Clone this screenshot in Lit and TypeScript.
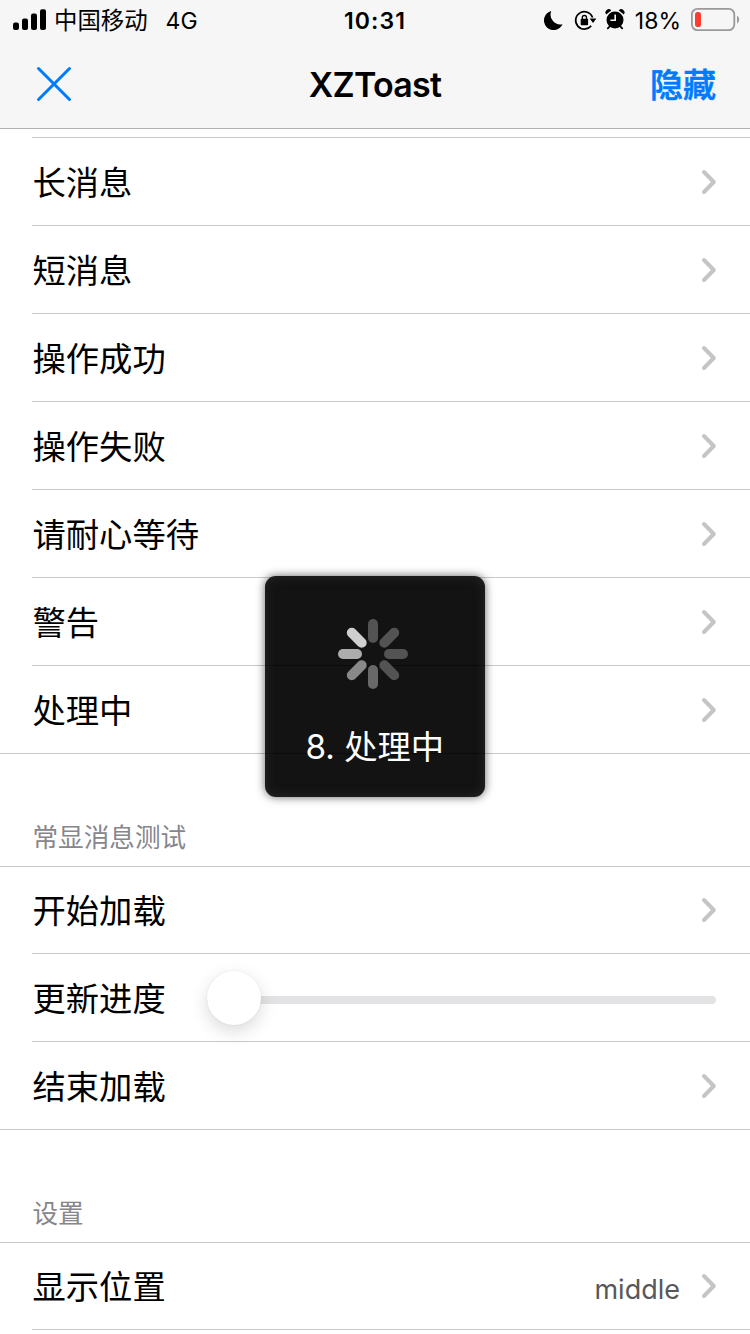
import { LitElement, html, css, svg } from "lit";
import { customElement, property } from "lit/decorators.js";

const chevron = html`<svg width="18" height="28" viewBox="0 0 18 28" fill="none" stroke="#c5c5c8" stroke-width="4">
  <path d="M4 4 L13.8 14 L4 24" stroke-linecap="round" stroke-linejoin="round" />
</svg>`;

@customElement("list-row")
class ListRow extends LitElement {
  @property() label = "";
  @property() detail = "";
  @property({ type: Boolean }) slider = false;
  @property({ type: Boolean, reflect: true }) last = false;
  @property({ type: Boolean, reflect: true }) first = false;

  static styles = css`
    :host { display: block; height: 88px; box-sizing: border-box; padding-left: 32px; }
    :host([first]) { height: 87px; }
    :host([last]) { padding-left: 0; }
    .row {
      height: 100%; box-sizing: border-box; border-bottom: 1px solid #c8c7cc;
      display: flex; align-items: center; padding-right: 32px;
    }
    :host([last]) .row { padding-left: 32px; }
    .label { font-size: 33.3px; line-height: 48px; color: #000; white-space: nowrap; padding-top: 3px; padding-left: 0.5px; }
    :host([first]) .label { padding-top: 2px; }
    .detail { margin-left: auto; font-size: 27px; line-height: 40px; color: #58585a; padding-top: 8px; margin-right: 20px; }
    .chev { margin-left: auto; display: flex; padding-top: 1px; }
    :host([first]) .chev { padding-top: 0; }
    .detail + .chev { margin-left: 0; }
    .track {
      flex: 1; margin: 5px 2px 0 41.5px; height: 8px; border-radius: 4px; background: #e3e3e5;
      display: flex; align-items: center;
    }
    .thumb {
      flex: none; width: 54px; height: 54px; border-radius: 50%; background: #fff; margin-top: -4px;
      box-shadow: 0 6px 18px rgba(0, 0, 0, 0.15), 0 0 2px rgba(0, 0, 0, 0.08);
    }
  `;

  render() {
    return html`<div class="row">
      <span class="label">${this.label}</span>
      ${this.slider
        ? html`<div class="track"><div class="thumb"></div></div>`
        : html`${this.detail ? html`<span class="detail">${this.detail}</span>` : ""}<span class="chev">${chevron}</span>`}
    </div>`;
  }
}

@customElement("app-root")
class AppRoot extends LitElement {
  static styles = css`
    :host {
      display: block; position: relative; width: 750px; height: 1334px; overflow: hidden;
      background: #fff; font-family: Inter, "Noto Sans CJK SC", sans-serif; color: #000;
    }
    .header { height: 129px; box-sizing: border-box; background: #f6f6f6; border-bottom: 1px solid #b2b2b2; }
    .status { height: 40px; display: grid; grid-template-columns: 1fr auto 1fr; align-items: center; font-size: 23px; line-height: 40px; }
    .left, .right { display: flex; align-items: center; }
    .left { padding-left: 13px; }
    .carrier { margin-left: 8px; font-size: 23.4px; padding-top: 2px; line-height: 38px; }
    .net { margin-left: 18px; padding-top: 2px; line-height: 38px; }
    .time { font-weight: 600; letter-spacing: 1.1px; padding-top: 2px; line-height: 38px; }
    .right { justify-content: flex-end; padding-right: 10px; }
    .pct { margin: 0 10px 0 9px; padding-top: 2px; line-height: 38px; }
    .nav { height: 88px; display: grid; grid-template-columns: 1fr auto 1fr; align-items: center; }
    .close { margin-left: 36px; display: flex; }
    .title { font-size: 34px; font-weight: 600; line-height: 48px; letter-spacing: -0.75px; padding-top: 1px; }
    .hide {
      text-align: right; padding: 2px 34px 0 0; color: #007aff; font-size: 33px; font-weight: 500; line-height: 48px;
      -webkit-text-stroke: 0.6px #007aff;
    }
    .peek { height: 9px; box-sizing: border-box; margin-left: 32px; border-bottom: 1px solid #c8c7cc; }
    .section {
      height: 113px; box-sizing: border-box; border-bottom: 1px solid #c8c7cc;
      padding: 65px 0 0 32.5px; font-size: 25.6px; line-height: 38px; color: #86868b;
    }
    .toast {
      position: absolute; left: 264.5px; top: 576px; width: 220.5px; height: 221px; box-sizing: border-box;
      border-radius: 11px; color: #fff;
      background:
        linear-gradient(#0b0b0b, #0b0b0b) 0 89px / 100% 1px no-repeat,
        linear-gradient(#0b0b0b, #0b0b0b) 0 177px / 100% 1px no-repeat,
        #131313;
      box-shadow: 0 0 10px rgba(0, 0, 0, 0.6), inset 0 0 12px rgba(60, 60, 60, 0.5);
      display: flex; flex-direction: column; align-items: center; padding-top: 42px;
    }
    .spinner { display: block; margin-right: 4px; }
    .msg { margin-top: 33px; font-size: 33.3px; line-height: 48px; white-space: nowrap; }
  `;

  render() {
    const shades = ["#535353", "#535353", "#535353", "#535353", "#686868", "#898989", "#adadad", "#cfcfcf"];
    return html`
      <div class="header">
        <div class="status">
          <div class="left">
            <svg width="33" height="22" viewBox="0 0 33 22">
              <rect x="0" y="13.5" width="6" height="7.5" rx="2" />
              <rect x="9" y="9.5" width="6" height="11.5" rx="2" />
              <rect x="18" y="4.5" width="6" height="16.5" rx="2" />
              <rect x="27" y="0.3" width="6" height="20.7" rx="2" />
            </svg>
            <span class="carrier">中国移动</span><span class="net">4G</span>
          </div>
          <div class="time">10:31</div>
          <div class="right">
            <svg width="82" height="24" viewBox="544 8 82 24">
              <path d="M551.3 11 A9.7 9.7 0 1 0 562.6 24.2 A9.8 9.8 0 0 1 551.3 11Z" />
              <path d="M592.6 17.6 A8.7 8.7 0 1 0 591.2 25.8" fill="none" stroke="#000" stroke-width="1.7" />
              <path d="M589.6 18.6 H596.4 L593 23Z" />
              <rect x="580.7" y="18.8" width="7.4" height="6.4" rx="0.8" />
              <path d="M582.3 19.4 V17.6 A2.1 2.1 0 0 1 586.5 17.6 V19.4" fill="none" stroke="#000" stroke-width="1.3" />
              <circle cx="615" cy="19.9" r="8.5" />
              <path d="M610 26.2 L607.8 28.4 M620 26.2 L622.2 28.4" stroke="#000" stroke-width="1.8" stroke-linecap="round" />
              <path d="M606.2 14.4 A3.2 3.2 0 0 1 611.2 10.4Z M618.8 10.4 A3.2 3.2 0 0 1 623.8 14.4Z" />
              <path d="M615.2 14.4 V20.2 H610.4" fill="none" stroke="#f6f6f6" stroke-width="1.6" />
            </svg>
            <span class="pct">18%</span>
            <svg width="49" height="24" viewBox="0 0 49 24">
              <rect x="0.9" y="0.9" width="42.4" height="21.2" rx="5.5" fill="none" stroke="#9a9a9a" stroke-width="1.8" />
              <rect x="4" y="4" width="6" height="15" rx="2.8" fill="#ff3b30" />
              <path d="M46 7.5 Q48.2 9 48.2 11.5 Q48.2 14 46 15.5Z" fill="#9a9a9a" />
            </svg>
          </div>
        </div>
        <div class="nav">
          <div class="close">
            <svg width="36" height="36" viewBox="0 0 36 36" stroke="#007aff" stroke-width="3" stroke-linecap="round">
              <path d="M2.5 2.5 L33.5 33.5 M33.5 2.5 L2.5 33.5" />
            </svg>
          </div>
          <div class="title">XZToast</div>
          <div class="hide">隐藏</div>
        </div>
      </div>
      <div class="peek"></div>
      ${["长消息", "短消息", "操作成功", "操作失败", "请耐心等待", "警告", "处理中"].map(
        (t, i) => html`<list-row label=${t} ?last=${i === 6}></list-row>`
      )}
      <div class="section">常显消息测试</div>
      <list-row first label="开始加载"></list-row>
      <list-row slider label="更新进度"></list-row>
      <list-row last label="结束加载"></list-row>
      <div class="section">设置</div>
      <list-row first label="显示位置" detail="middle"></list-row>
      <div class="toast">
        <svg class="spinner" width="72" height="72" viewBox="-36 -36 72 72">
          ${shades.map((c, i) => svg`<rect x="-5" y="-35" width="10" height="24" rx="5" fill=${c} transform="rotate(${i * 45})" />`)}
        </svg>
        <div class="msg">8. 处理中</div>
      </div>
    `;
  }
}
